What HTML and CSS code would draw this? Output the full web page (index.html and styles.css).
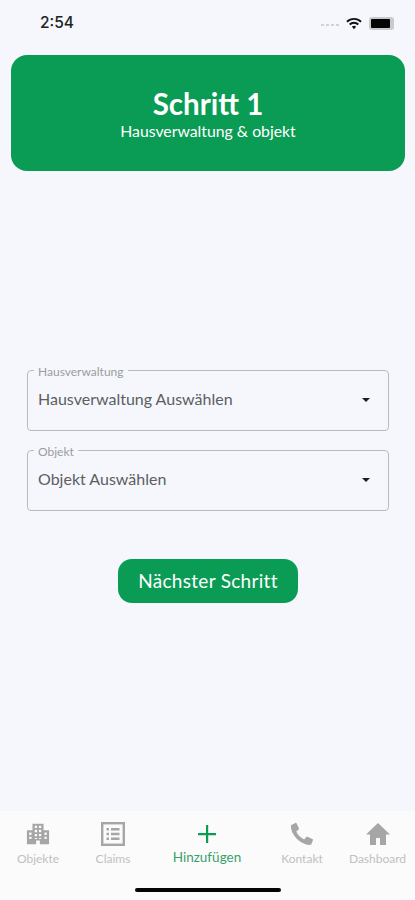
FILE: index.html
```html
<!DOCTYPE html>
<html lang="de">
<head>
    <meta charset="UTF-8">
    <meta name="viewport" content="width=device-width, initial-scale=1.0">
    <title>Schritt 1</title>
    <link rel="stylesheet" href="styles.css">
</head>
<body>
    <div class="screen">
        <div class="status-bar">
            <span class="time">2:54</span>
            <div class="status-icons">
                <span class="signal"><i></i><i></i><i></i><i></i></span>
                <svg class="wifi" width="16" height="13" viewBox="0 0 17 13">
                    <path d="M1 4.600a10.800 10.800 0 0 1 15 0" fill="none" stroke="#111" stroke-width="2"/>
                    <path d="M3.900 7.600a6.500 6.500 0 0 1 9.200 0" fill="none" stroke="#111" stroke-width="2"/>
                    <path d="M6.300 10a3.200 3.200 0 0 1 4.400 0L8.500 12.500z" fill="#111"/>
                </svg>
                <span class="battery"><i></i></span>
            </div>
        </div>

        <header class="hero">
            <h1>Schritt 1</h1>
            <p>Hausverwaltung &amp; objekt</p>
        </header>

        <main class="form">
            <div class="select-field">
                <span class="field-label">Hausverwaltung</span>
                <span class="field-value">Hausverwaltung Auswählen</span>
                <span class="caret"></span>
            </div>
            <div class="select-field">
                <span class="field-label">Objekt</span>
                <span class="field-value">Objekt Auswählen</span>
                <span class="caret"></span>
            </div>
            <button class="next-btn">Nächster Schritt</button>
        </main>

        <nav class="tab-bar">
            <a class="tab">
                <svg width="24" height="24" viewBox="0 0 26 24">
                    <path fill="#a6a6a6" fill-rule="evenodd" d="M7 1h12v7h6v15H15v-4h-4v4H1V8h6zM9.500 3v2.500H12V3zM14 3v2.500h2.500V3zM9.500 7.500V10H12V7.500zM14 7.500V10h2.500V7.500zM9.500 12v2.500H12V12zM14 12v2.500h2.500V12zM3.500 10.500V13H6v-2.500zM20 10.500V13h2.500v-2.500zM3.500 15v2.500H6V15zM20 15v2.500h2.500V15zM9.500 16.300v1.200H12v-1.200zM14 16.300v1.200h2.500v-1.200z"/>
                </svg>
                <span>Objekte</span>
            </a>
            <a class="tab">
                <svg width="24" height="24" viewBox="0 0 24 24">
                    <rect x="1.200" y="1.200" width="21.600" height="21.600" fill="none" stroke="#a6a6a6" stroke-width="2.400"/>
                    <path fill="#a6a6a6" d="M5.500 6h2.500v2.500H5.500zM10 6h8.500v2.500H10zM5.500 10.800h2.500v2.500H5.500zM10 10.800h8.500v2.500H10zM5.500 15.500h2.500V18H5.500zM10 15.500h8.500V18H10z"/>
                </svg>
                <span>Claims</span>
            </a>
            <a class="tab active">
                <svg width="24" height="24" viewBox="0 0 24 24">
                    <path fill="#0a9c55" d="M11 3h2.200v8H21v2.200h-7.800V21H11v-7.800H3V11h8z"/>
                </svg>
                <span>Hinzufügen</span>
            </a>
            <a class="tab">
                <svg width="25" height="24" viewBox="0 0 26 25">
                    <path fill="#a6a6a6" d="M1 3.500 5.500 1c.7-.3 1.200 0 1.500.6l2.200 5c.2.600.1 1-.4 1.400L6.500 9.800c1.500 3.400 4.900 6.700 8.300 8.300l1.900-2.300c.4-.5.900-.6 1.400-.4l5.200 2.200c.6.300.8.800.6 1.400l-1.700 4.200c-.3.600-.7.800-1.400.8C10.500 23.500 1 13.500 1 4.500c0-.4 0-.8 0-1z"/>
                </svg>
                <span>Kontakt</span>
            </a>
            <a class="tab">
                <svg width="26" height="24" viewBox="0 0 26 24">
                    <path fill="#a6a6a6" d="M13 1 1 12.500h4V23h6v-7h4v7h6V12.500h4z"/>
                </svg>
                <span>Dashboard</span>
            </a>
            <div class="home-indicator"></div>
        </nav>
    </div>
</body>
</html>
```

FILE: styles.css
```css
:root {
    --green: #0a9c55;
    --page: #f5f7fc;
    --border: #b9bbbf;
}

* {
    box-sizing: border-box;
}

body {
    margin: 0;
    background: var(--page);
    font-family: 'Lato', 'Liberation Sans', sans-serif;
}

.screen {
    height: 900px;
    display: flex;
    flex-direction: column;
    overflow: hidden;
}

.status-bar {
    height: 55px;
    flex: none;
    padding: 14px 21px 0 40px;
    display: flex;
    justify-content: space-between;
    align-items: flex-start;
}

.time {
    font-family: 'Inter', sans-serif;
    font-size: 15.500px;
    font-weight: 500;
    line-height: 18px;
    color: #222;
}

.status-icons {
    display: flex;
    align-items: center;
    gap: 7px;
    height: 18px;
}

.signal {
    display: flex;
    gap: 2px;
    margin-top: 4px;
}

.signal i {
    width: 3px;
    height: 2px;
    background: #d0d2d6;
}

.battery {
    width: 25px;
    height: 13px;
    border-radius: 3px;
    background: #c9cace;
    padding: 2px;
}

.battery i {
    display: block;
    width: 19px;
    height: 9px;
    border-radius: 1px;
    background: #050505;
}

.hero {
    flex: none;
    height: 116px;
    margin: 0 10px 0 11px;
    padding-top: 2px;
    border-radius: 16px;
    background: var(--green);
    color: #fff;
    text-align: center;
    display: flex;
    flex-direction: column;
    justify-content: center;
}

.hero h1 {
    margin: 0;
    font-size: 29.500px;
    font-weight: 700;
    line-height: 32px;
}

.hero p {
    margin: 1px 0 0;
    font-size: 15.800px;
    line-height: 20px;
}

.form {
    flex: 1;
    padding: 199px 26px 0 27px;
    display: flex;
    flex-direction: column;
    gap: 19px;
}

.select-field {
    position: relative;
    height: 61px;
    border: 1px solid var(--border);
    border-radius: 4px;
    padding: 18px 10px 0;
    display: flex;
    justify-content: space-between;
}

.field-label {
    position: absolute;
    top: -6px;
    left: 6px;
    padding: 0 4px;
    background: var(--page);
    font-size: 12px;
    line-height: 13px;
    color: #9a9ca0;
}

.field-value {
    font-size: 16px;
    line-height: 20px;
    color: #5c5e62;
}

.caret {
    width: 0;
    height: 0;
    margin: 9px 8px 0 0;
    border-left: 4.500px solid transparent;
    border-right: 4.500px solid transparent;
    border-top: 4.500px solid #1c1c1c;
}

.next-btn {
    align-self: center;
    width: 180px;
    height: 44px;
    margin-top: 29px;
    padding: 0 0 2px;
    border: none;
    border-radius: 14px;
    background: var(--green);
    color: #fff;
    font-family: inherit;
    font-size: 19px;
    font-weight: 400;
    letter-spacing: 0.3px;
}

.tab-bar {
    flex: none;
    position: relative;
    height: 89px;
    padding-top: 11px;
    background: #fbfbfb;
    display: grid;
    grid-template-columns: 76px 74px 114px 76px 75px;
    align-items: start;
}

.tab {
    display: flex;
    flex-direction: column;
    align-items: center;
    gap: 6px;
    font-size: 12px;
    line-height: 13px;
    color: #c0c0c0;
}

.tab.active {
    gap: 5px;
    color: #3a9f6c;
    font-size: 13.500px;
}

.home-indicator {
    position: absolute;
    left: 135px;
    bottom: 8px;
    width: 146px;
    height: 4px;
    border-radius: 2px;
    background: #050505;
}
```
